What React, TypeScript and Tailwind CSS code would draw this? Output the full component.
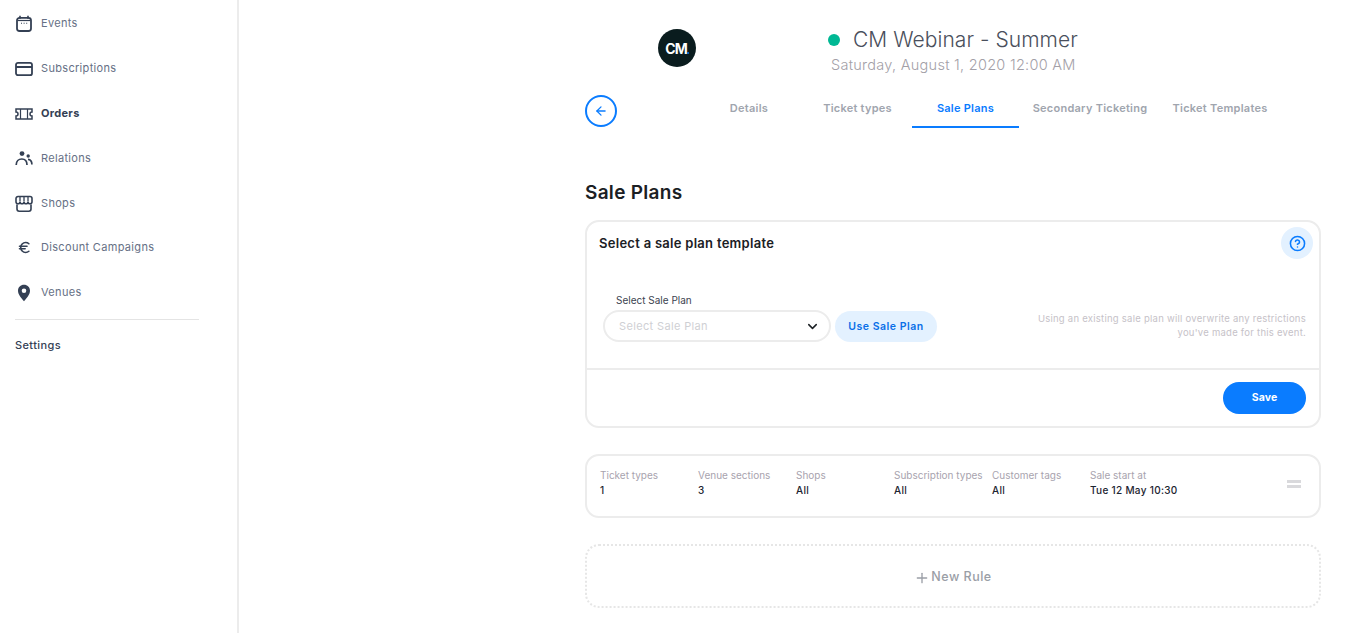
import { ArrowLeft, ChevronDown, CircleHelp, Euro, Plus } from "lucide-react";
import type { ReactNode } from "react";

const font = "font-['Inter','Liberation_Sans',sans-serif]";

function CalendarIcon() {
  return (
    <svg width="18" height="18" viewBox="0 0 18 18" fill="none" stroke="#344054" strokeWidth="1.8">
      <rect x="2" y="2.8" width="14" height="13.2" rx="2.5" />
      <path d="M5 .8v3M13 .8v3" strokeWidth="1.6" />
      <path d="M2.5 5.5h13" strokeWidth="1.2" />
      <path d="M6 8.2h1M8.6 8.2h1M11.2 8.2h1" strokeWidth="1.1" />
    </svg>
  );
}

function CardIcon() {
  return (
    <svg width="18" height="18" viewBox="0 0 18 18" fill="none" stroke="#344054" strokeWidth="1.8">
      <rect x="1" y="2.8" width="16" height="12.4" rx="2" />
      <path d="M1 7h16" strokeWidth="2" />
    </svg>
  );
}

function TicketIcon() {
  return (
    <svg width="18" height="18" viewBox="0 0 18 18" fill="none" stroke="#344054" strokeWidth="1.5">
      <path d="M1 4h16v3a2 2 0 0 0 0 4v3H1v-3a2 2 0 0 0 0-4z" />
      <path d="M5.5 4v10M12.5 4v10" strokeWidth="1.2" />
    </svg>
  );
}

function PeopleIcon() {
  return (
    <svg width="18" height="18" viewBox="0 0 18 18" fill="none" stroke="#344054" strokeWidth="1.7">
      <circle cx="7" cy="3.6" r="2.4" fill="#344054" stroke="none" />
      <circle cx="13.2" cy="6" r="1.7" fill="#344054" stroke="none" />
      <path d="M1.2 15c0-3.6 2.4-6 5.6-6s5.2 2.4 5.2 6" />
      <path d="M13 9.4c2.2.2 3.9 2.2 3.9 5" />
    </svg>
  );
}

function ShopIcon() {
  return (
    <svg width="18" height="18" viewBox="0 0 18 18" fill="none" stroke="#344054" strokeWidth="1.6">
      <path d="M3 1.5h12a2 2 0 0 1 2 2v3.2a2 2 0 0 1-4 0 2 2 0 0 1-4 0 2 2 0 0 1-4 0 2 2 0 0 1-4 0V3.500a2 2 0 0 1 2-2z" />
      <path d="M5 1.500v5M9 1.500v5M13 1.500v5" strokeWidth="1.300" />
      <path d="M2 9.500v4.500a2.200 2.200 0 0 0 2.200 2.200h9.600a2.200 2.200 0 0 0 2.200-2.200V9.500" />
    </svg>
  );
}

function PinIcon() {
  return (
    <svg width="18" height="18" viewBox="0 0 18 18">
      <path
        fillRule="evenodd"
        fill="#344054"
        d="M9 .8c3.400 0 6 2.600 6 5.900 0 3.900-3.700 7.900-6 10.500-2.300-2.600-6-6.600-6-10.500C3 3.400 5.600.8 9 .8zm0 3.700a2.300 2.300 0 1 0 0 4.600 2.300 2.300 0 0 0 0-4.600z"
      />
    </svg>
  );
}

function NavItem({ icon, label, bold, short }: { icon: ReactNode; label: string; bold?: boolean; short?: boolean }) {
  return (
    <div className={`flex items-center gap-[8px] pl-[15px] ${short ? "mb-[1px] h-[43px]" : "h-[45px]"}`}>
      <span className="flex w-[18px] justify-center">{icon}</span>
      <span className={bold ? "text-[11px] font-bold tracking-[0.3px] text-[#344054]" : "text-[11px] tracking-[0.32px] text-[#667085]"}>
        {label}
      </span>
    </div>
  );
}

function Tab({ label, width, active }: { label: string; width: string; active?: boolean }) {
  return (
    <div
      className={`flex h-[40px] items-center justify-center whitespace-nowrap border-b-2 pt-[2px] text-[11px] font-semibold tracking-[0.25px] ${width} ${
        active ? "border-[#0a7cff] text-[#0a7cff]" : "border-transparent text-[#a0a5ae]"
      }`}
    >
      {label}
    </div>
  );
}

function Stat({ label, value, width }: { label: string; value: string; width: string }) {
  return (
    <div className={`flex flex-col gap-[1px] whitespace-nowrap ${width}`}>
      <span className="text-[10px] leading-[13px] text-[#a8a3ae]">{label}</span>
      <span className="text-[10px] font-medium leading-[14px] tracking-[0.3px] text-[#1b2430]">{value}</span>
    </div>
  );
}

export default function App() {
  return (
    <div className={`flex h-[633px] overflow-hidden bg-white ${font}`}>
      <aside className="h-full w-[239px] shrink-0 border-r-2 border-[#ececec] pt-[1px]">
        <NavItem icon={<CalendarIcon />} label="Events" />
        <NavItem icon={<CardIcon />} label="Subscriptions" />
        <NavItem icon={<TicketIcon />} label="Orders" bold />
        <NavItem icon={<PeopleIcon />} label="Relations" />
        <NavItem icon={<ShopIcon />} label="Shops" />
        <NavItem icon={<Euro size={15} strokeWidth={2.6} color="#344054" />} label="Discount Campaigns" short />
        <NavItem icon={<PinIcon />} label="Venues" />
        <div className="ml-[15px] mt-[4px] h-[1px] w-[184px] bg-[#e4e4e4]" />
        <div className="mt-[17px] pl-[15px] text-[11px] font-medium tracking-[0.4px] text-[#344054]">Settings</div>
      </aside>

      <main className="w-[736px] ml-[346px] shrink-0">
        {/* event header */}
        <div className="flex h-[88px]">
          <div className="ml-[73px] mt-[29px] flex h-[38px] w-[38px] items-center justify-center rounded-full bg-[#0a1c1e]">
            <span className="text-[14px] font-bold tracking-[-1px] text-white">CM</span>
            <span className="mt-[9px] h-[2px] w-[2px] rounded-full bg-[#0a7cff]" />
          </div>
          <div className="ml-[132px] pt-[26px]">
            <div className="flex items-center gap-[13px]">
              <span className="h-[12px] w-[12px] rounded-full bg-[#00b894]" />
              <span className="whitespace-nowrap text-[21px] font-light leading-[27px] tracking-[0.05px] text-[#4a4f5c]">CM Webinar - Summer</span>
            </div>
            <div className="ml-[3px] mt-[2px] whitespace-nowrap text-[14.500px] font-light leading-[20px] tracking-[0.27px] text-[#a3a0a7]">
              Saturday, August 1, 2020 12:00 AM
            </div>
          </div>
        </div>

        {/* tabs */}
        <div className="flex h-[41px] items-start">
          <div className="mt-[7px] flex h-[32px] w-[32px] items-center justify-center rounded-full border-2 border-[#0a7cff]">
            <ArrowLeft size={14} color="#0a7cff" strokeWidth={2.200} />
          </div>
          <div className="ml-[78px] flex">
            <Tab label="Details" width="w-[108px]" />
            <Tab label="Ticket types" width="w-[109px]" />
            <Tab label="Sale Plans" width="w-[107px]" active />
            <Tab label="Secondary Ticketing" width="w-[142px]" />
            <Tab label="Ticket Templates" width="w-[118px]" />
          </div>
        </div>

        <h1 className="mt-[52px] text-[19px] font-semibold leading-[24px] tracking-[0.3px] text-[#1b2024]">Sale Plans</h1>

        {/* template card */}
        <section className="mt-[15px] h-[208px] rounded-[14px] border-2 border-[#ececec]">
          <div className="flex h-[148px] flex-col border-b-2 border-[#ececec] px-[12px]">
            <div className="flex items-start justify-between">
              <div className="mt-[13px] text-[13px] font-semibold leading-[17px] tracking-[0.28px] text-[#1b2024]">Select a sale plan template</div>
              <div className="mt-[5px] -mr-[6px] flex h-[32px] w-[32px] items-center justify-center rounded-full bg-[#e3f1ff]">
                <CircleHelp size={17} color="#0a7cff" strokeWidth={2.200} />
              </div>
            </div>
            <div className="mt-[34px] flex items-end justify-between">
              <div className="flex items-end gap-[4px] pl-[4px]">
                <div>
                  <div className="mb-[3px] pl-[13px] text-[10px] leading-[14px] text-[#3c4350]">Select Sale Plan</div>
                  <div className="flex h-[32px] w-[228px] items-center justify-between rounded-full border-2 border-[#ececec] pl-[14px] pr-[9px]">
                    <span className="text-[11px] tracking-[0.35px] text-[#cfd0d4]">Select Sale Plan</span>
                    <ChevronDown size={15} color="#1b2024" strokeWidth={2.400} />
                  </div>
                </div>
                <div className="flex h-[31px] w-[102px] items-center justify-center rounded-full bg-[#e3f1ff] text-[10.500px] font-semibold tracking-[0.5px] text-[#0a6fe8]">
                  Use Sale Plan
                </div>
              </div>
              <p className="pb-[2px] pr-[1px] text-right text-[9.500px] leading-[14px] tracking-[0.25px] text-[#c6c2c8]">
                Using an existing sale plan will overwrite any restrictions
                <br />
                you've made for this event.
              </p>
            </div>
          </div>
          <div className="flex justify-end pr-[13px] pt-[12px]">
            <div className="flex h-[32px] w-[83px] items-center justify-center rounded-full bg-[#0a7cff] text-[10.500px] font-bold tracking-[0.1px] text-white">Save</div>
          </div>
        </section>

        {/* rule */}
        <section className="mt-[26px] flex h-[64px] items-start rounded-[14px] border-2 border-[#ececec] pl-[13px] pt-[13px]">
          <Stat label="Ticket types" value="1" width="w-[98px]" />
          <Stat label="Venue sections" value="3" width="w-[98px]" />
          <Stat label="Shops" value="All" width="w-[98px]" />
          <Stat label="Subscription types" value="All" width="w-[98px]" />
          <Stat label="Customer tags" value="All" width="w-[98px]" />
          <Stat label="Sale start at" value="Tue 12 May 10:30" width="w-[197px]" />
          <div className="mt-[11px] flex flex-col gap-[2px]">
            <span className="h-[3px] w-[14px] bg-[#d9d9dc]" />
            <span className="h-[3px] w-[14px] bg-[#d9d9dc]" />
          </div>
        </section>

        {/* new rule */}
        <section className="mt-[26px] flex h-[64px] items-center justify-center gap-[1px] rounded-[14px] border-2 border-dotted border-[#e6e6e6] pt-[3px] text-[12.500px] font-medium tracking-[0.5px] text-[#9a9ea6]">
          <Plus size={16} color="#9a9ea6" />
          New Rule
        </section>
      </main>
    </div>
  );
}
